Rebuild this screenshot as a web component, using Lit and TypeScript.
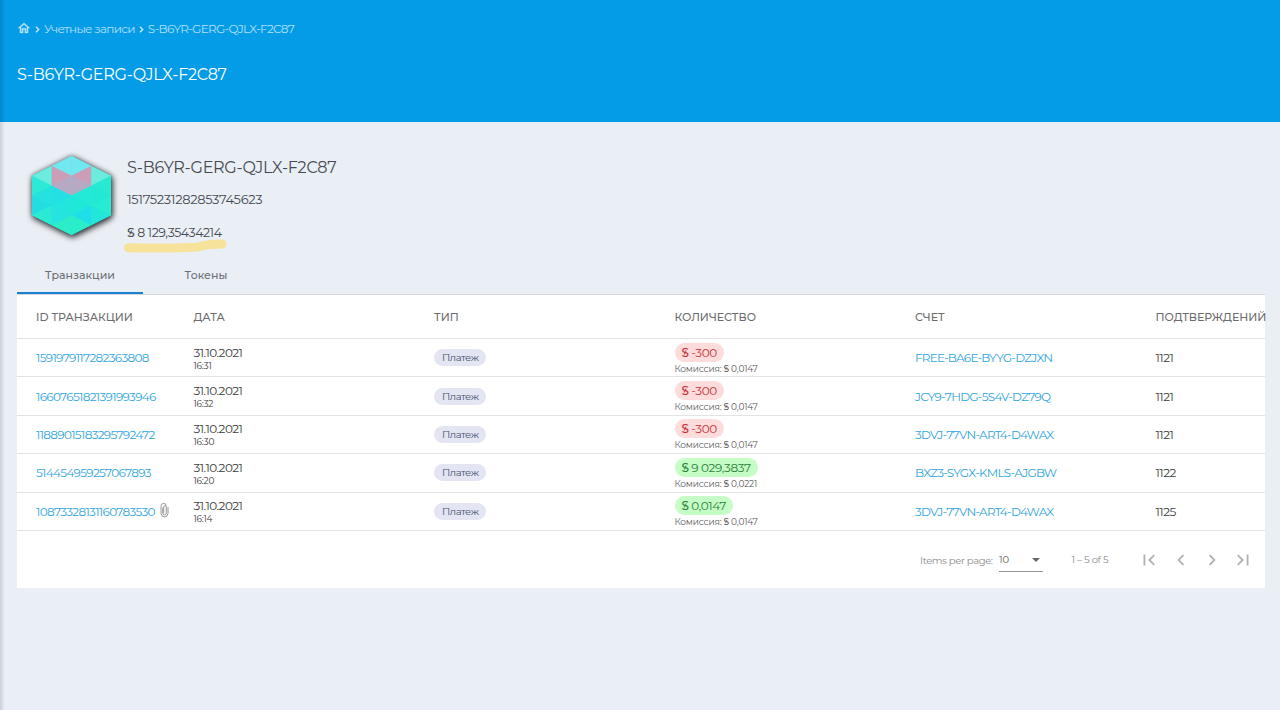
import { LitElement, html, css, svg } from 'lit';
import { customElement, property } from 'lit/decorators.js';
import { classMap } from 'lit/directives/class-map.js';

interface Transaction {
  id: string;
  time: string;
  amount: string;
  fee: string;
  account: string;
  confirmations: number;
  incoming?: boolean;
  attachment?: boolean;
}

const ACCOUNT = 'S-B6YR-GERG-QJLX-F2C87';

const TRANSACTIONS: Transaction[] = [
  { id: '1591979117282363808', time: '16:31', amount: '-300', fee: '0,0147', account: 'FREE-BA6E-BYYG-DZJXN', confirmations: 1121 },
  { id: '16607651821391993946', time: '16:32', amount: '-300', fee: '0,0147', account: 'JCY9-7HDG-5S4V-DZ79Q', confirmations: 1121 },
  { id: '11889015183295792472', time: '16:30', amount: '-300', fee: '0,0147', account: '3DVJ-77VN-ART4-D4WAX', confirmations: 1121 },
  { id: '514454959257067893', time: '16:20', amount: '9 029,3837', fee: '0,0221', account: 'BXZ3-SYGX-KMLS-AJGBW', confirmations: 1122, incoming: true },
  { id: '10873328131160783530', time: '16:14', amount: '0,0147', fee: '0,0147', account: '3DVJ-77VN-ART4-D4WAX', confirmations: 1125, incoming: true, attachment: true },
];

/**
 * Hexagonal account avatar, built from 24 triangles in four vertical strips
 */
@customElement('account-avatar')
export class AccountAvatar extends LitElement {
  static styles = css`
    :host {
      display: block;
      width: 79px;
      height: 79px;
    }

    svg {
      display: block;
      overflow: visible;
      filter: drop-shadow(1px 2px 3px rgba(0, 0, 0, 0.8)) drop-shadow(0 0 2px rgba(0, 0, 0, 0.3));
    }
  `;

  // colours of each strip, top to bottom
  strips = [
    ['#6cecdc', '#2de9d8', '#26e2de', '#24dde3', '#2be9d2'],
    ['#70e8f0', '#cb9db6', '#b6a9c3', '#24e0e2', '#24e5dd', '#25e4df', '#2decc8'],
    ['#70e8f0', '#cb9db6', '#b6a9c3', '#22ead6', '#20e8d8', '#1fdee8', '#2aedc9'],
    ['#6cecdc', '#27ead2', '#22e9d4', '#25ecd2', '#22e6da'],
  ];

  renderStrip(colors: string[], index: number) {
    const left = index < 2;
    const xInner = left ? index + 1 : index;
    const xOuter = left ? index : index + 1;
    const topInner = Math.abs(xInner - 2);
    const topOuter = Math.abs(xOuter - 2);
    return colors.map((color, i) => {
      const step = i - (i % 2);
      const points = i % 2 === 0
        ? [[xInner, topInner + step], [xInner, topInner + step + 2], [xOuter, topOuter + step]]
        : [[xOuter, topOuter + step], [xOuter, topOuter + step + 2], [xInner, topInner + step + 2]];
      return svg`<polygon points=${points.map((p) => p.join(',')).join(' ')} fill=${color}></polygon>`;
    });
  }

  render() {
    return html`
      <svg width="79" height="79" viewBox="0 0 4 8" preserveAspectRatio="none">
        <polygon points="2,0 4,2 4,6 2,8 0,6 0,2" fill="#2ae6da"></polygon>
        <polygon points="2,0 3,1 3,3 2,4 1,3 1,1" fill="#a8bccb"></polygon>
        ${this.strips.map((colors, i) => this.renderStrip(colors, i))}
      </svg>
    `;
  }
}

/**
 * Paginator below the transaction table
 */
@customElement('table-paginator')
export class TablePaginator extends LitElement {
  static styles = css`
    :host {
      display: flex;
      align-items: center;
      justify-content: flex-end;
      height: 57.5px;
      padding-right: 6px;
      font-size: 10px;
      color: #8b8b8b;
    }

    .label {
      width: 79px;
      margin-top: 1px;
      white-space: nowrap;
      letter-spacing: -0.37px;
    }

    .select {
      display: flex;
      align-items: center;
      justify-content: space-between;
      box-sizing: border-box;
      width: 44px;
      height: 24px;
      margin-right: 28.500px;
      padding: 1px 3px 0 0;
      border-bottom: 1px solid #949494;
      color: #5c5c5c;
    }

    .arrow {
      border: 4px solid transparent;
      border-top-color: #696969;
      border-bottom: 0;
    }

    .range {
      width: 62px;
      white-space: nowrap;
      letter-spacing: -0.33px;
    }

    .icon {
      width: 22px;
      height: 22px;
      margin: 0 4.7px;
      fill: #b0b0b0;
    }
  `;

  renderIcon(path: string) {
    return html`<svg class="icon" viewBox="0 0 24 24"><path d=${path}></path></svg>`;
  }

  render() {
    return html`
      <span class="label">Items per page:</span>
      <span class="select">10<span class="arrow"></span></span>
      <span class="range">1 – 5 of 5</span>
      ${this.renderIcon('M18.41 16.59L13.82 12l4.59-4.59L17 6l-6 6 6 6zM6 6h2v12H6z')}
      ${this.renderIcon('M15.41 7.41L14 6l-6 6 6 6 1.41-1.41L10.83 12z')}
      ${this.renderIcon('M10 6L8.59 7.41 13.17 12l-4.58 4.59L10 18l6-6z')}
      ${this.renderIcon('M5.59 7.41L10.18 12l-4.59 4.59L7 18l6-6-6-6zM16 6h2v12h-2z')}
    `;
  }
}

@customElement('transaction-table')
export class TransactionTable extends LitElement {
  @property({ attribute: false }) transactions: Transaction[] = [];

  static styles = css`
    :host {
      display: block;
    }

    .row {
      display: grid;
      grid-template-columns: 157.5px repeat(4, 240.5px) 110px;
      align-items: center;
      box-sizing: border-box;
      height: 38.4px;
      padding-left: 19px;
      border-bottom: 1px solid #e3e3e3;
      font-size: 12px;
      color: #3b3b3b;
      white-space: nowrap;
    }

    .head {
      height: 44px;
      font-size: 11px;
      font-weight: 500;
      color: #6c6c6c;
    }

    .link {
      color: #2fa5de;
    }

    .id {
      display: flex;
      align-items: center;
      gap: 5px;
      letter-spacing: -0.67px;
    }

    .clip {
      width: 9px;
      height: 15px;
      margin-top: -1px;
      fill: none;
      stroke: #8d8d8d;
      stroke-width: 0.9;
    }

    .date {
      padding-top: 2px;
      line-height: 14px;
      letter-spacing: -0.53px;
    }

    .time {
      font-size: 9px;
      line-height: 12px;
      letter-spacing: -0.2px;
    }

    .type {
      display: inline-block;
      padding: 0 8px;
      border-radius: 9px;
      background: #e3e5f3;
      color: #45526f;
      font-size: 10px;
      line-height: 17px;
      letter-spacing: -0.45px;
    }

    .quantity {
      padding-top: 1px;
    }

    .amount {
      display: inline-block;
      padding: 0 7px;
      border-radius: 10px;
      background: #ffdcdc;
      color: #c92f36;
      line-height: 19px;
      letter-spacing: -0.38px;
    }

    .amount.incoming {
      background: #c6fdc6;
      color: #268336;
    }

    .sign {
      font-weight: 500;
    }

    .fee {
      margin-top: 1px;
      font-size: 9px;
      line-height: 11px;
      letter-spacing: -0.2px;
      color: #5b5b5b;
    }

    .account {
      letter-spacing: -0.76px;
    }

    .confirmations {
      letter-spacing: -0.5px;
    }
  `;

  renderClip() {
    return html`
      <svg class="clip" viewBox="0 0 9 15">
        <path d="M2.7 4.5v5.5a1.8 1.8 0 0 0 3.6 0V4a1.3 1.3 0 0 0-2.6 0v6.2M6.3 2.7A2.3 2.3 0 0 0 1 3.5v6.800a3.5 3.5 0 0 0 7 0V4"></path>
      </svg>
    `;
  }

  renderRow(tx: Transaction) {
    return html`
      <div class="row">
        <div class="id link">${tx.id}${tx.attachment ? this.renderClip() : ''}</div>
        <div class="date">
          <div>31.10.2021</div>
          <div class="time">${tx.time}</div>
        </div>
        <div><span class="type">Платеж</span></div>
        <div class="quantity">
          <div class=${classMap({ amount: true, incoming: !!tx.incoming })}><span class="sign">Ꞩ</span> ${tx.amount}</div>
          <div class="fee">Комиссия: <span class="sign">Ꞩ</span> ${tx.fee}</div>
        </div>
        <div class="account link">${tx.account}</div>
        <div class="confirmations">${tx.confirmations}</div>
      </div>
    `;
  }

  render() {
    return html`
      <div class="row head">
        <div>ID ТРАНЗАКЦИИ</div>
        <div>ДАТА</div>
        <div>ТИП</div>
        <div>КОЛИЧЕСТВО</div>
        <div>СЧЕТ</div>
        <div>ПОДТВЕРЖДЕНИЙ</div>
      </div>
      ${this.transactions.map((tx) => this.renderRow(tx))}
    `;
  }
}

@customElement('app-root')
export class AppRoot extends LitElement {
  static styles = css`
    :host {
      display: block;
      position: relative;
      box-sizing: border-box;
      height: 710px;
      overflow: hidden;
      background: #eaeff6;
      font-family: Montserrat, Inter, 'DejaVu Sans', sans-serif;
      color: #454a52;
    }

    /* shadow cast by the sidebar */
    .edge {
      position: absolute;
      inset: 0 auto 0 0;
      width: 5px;
      background: linear-gradient(to right, rgba(0, 0, 0, 0.13), rgba(0, 0, 0, 0));
    }

    header {
      box-sizing: border-box;
      height: 122px;
      padding: 19px 17px 0;
      background: #049be7;
      color: #fff;
    }

    .breadcrumbs {
      display: flex;
      align-items: center;
      height: 19px;
      font-size: 12px;
      letter-spacing: -0.7px;
      color: #b0e0fa;
      white-space: nowrap;
    }

    .home {
      width: 14px;
      height: 14px;
      margin-top: -2px;
      fill: #b0e0fa;
      stroke: #b0e0fa;
      stroke-width: 0.7;
    }

    .chevron {
      width: 5px;
      height: 7px;
      margin: 1px 4px 0 4px;
      fill: none;
      stroke: #c9eafb;
      stroke-width: 1.4;
    }

    h1 {
      margin: 26px 0 0;
      font-size: 16px;
      font-weight: 400;
      line-height: 22px;
      letter-spacing: -0.26px;
    }

    .account {
      display: flex;
      height: 134px;
    }

    account-avatar {
      margin: 34px 16px 0 32px;
    }

    .name {
      margin-top: 36px;
      font-size: 16px;
      font-weight: 400;
      line-height: 20px;
      letter-spacing: -0.28px;
    }

    .number {
      margin-top: 12px;
      font-size: 13px;
      line-height: 18px;
      letter-spacing: -0.34px;
    }

    .balance {
      position: relative;
      width: max-content;
      margin-top: 16px;
      font-size: 12.5px;
      line-height: 18px;
      letter-spacing: -0.43px;
    }

    .sign {
      font-weight: 500;
    }

    .marker {
      position: absolute;
      left: -5px;
      top: 13px;
      fill: none;
      stroke: #f6e29a;
      stroke-width: 9;
      stroke-linecap: round;
    }

    .tabs {
      display: flex;
      box-sizing: border-box;
      height: 39px;
      margin: 0 15px 0 17px;
      border-bottom: 1px solid #d5d9df;
    }

    .tab {
      width: 126px;
      height: 36px;
      line-height: 38px;
      text-align: center;
      font-size: 11px;
      font-weight: 500;
      color: #6c7076;
    }

    .tab.active {
      border-bottom: 2px solid #1a80d0;
    }

    .card {
      margin: 0 15px 0 17px;
      background: #fff;
    }
  `;

  renderChevron() {
    return html`<svg class="chevron" viewBox="0 0 5 7"><path d="M1 .8l2.7 2.7L1 6.2"></path></svg>`;
  }

  render() {
    return html`
      <header>
        <div class="breadcrumbs">
          <svg class="home" viewBox="0 0 24 24">
            <path d="M12 3 2 12h3v8.500h5.500v-6h3v6H19V12h3zM12 5.900l5 4.500v8h-1.500v-6h-7v6H7v-8z"></path>
          </svg>
          ${this.renderChevron()}
          <span>Учетные записи</span>
          ${this.renderChevron()}
          <span>${ACCOUNT}</span>
        </div>
        <h1>${ACCOUNT}</h1>
      </header>
      <section class="account">
        <account-avatar></account-avatar>
        <div>
          <div class="name">${ACCOUNT}</div>
          <div class="number">15175231282853745623</div>
          <div class="balance">
            <span class="sign">Ꞩ</span> 8 129,35434214
            <svg class="marker" width="108" height="18" viewBox="0 0 108 18">
              <path d="M6.5 10.8C30 11 55 11.5 74 10.3C82 9.5 80 7 100 7"></path>
            </svg>
          </div>
        </div>
      </section>
      <nav class="tabs">
        <div class="tab active">Транзакции</div>
        <div class="tab">Токены</div>
      </nav>
      <section class="card">
        <transaction-table .transactions=${TRANSACTIONS}></transaction-table>
        <table-paginator></table-paginator>
      </section>
      <div class="edge"></div>
    `;
  }
}
